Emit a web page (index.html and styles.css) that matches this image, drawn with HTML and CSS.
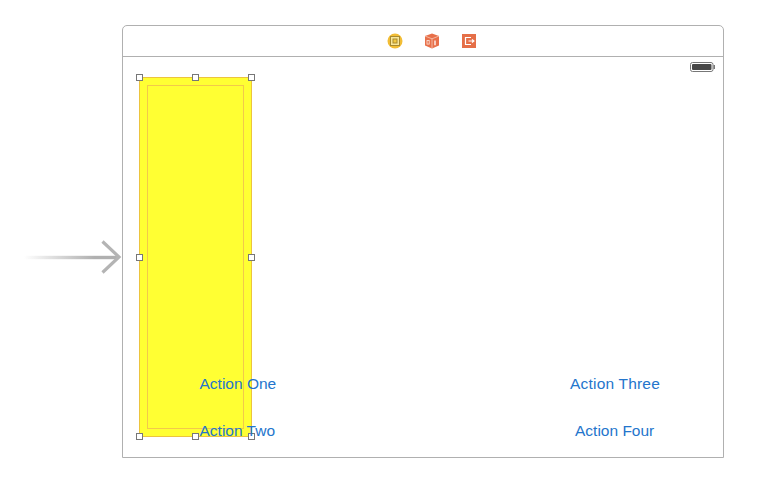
FILE: index.html
```html
<!DOCTYPE html>
<html lang="en">
<head>
<meta charset="utf-8">
<title>Storyboard scene</title>
<link rel="stylesheet" href="styles.css">
</head>
<body>
<div class="canvas">
  <svg class="entry-arrow" width="100" height="40" viewBox="0 0 100 40">
    <defs>
      <linearGradient id="fade" x1="0" x2="1" y1="0" y2="0">
        <stop offset="0" stop-color="#b0b0b0" stop-opacity="0"/>
        <stop offset="0.75" stop-color="#b0b0b0"/>
      </linearGradient>
    </defs>
    <rect x="0" y="16.8" width="94" height="3.4" fill="url(#fade)"/>
    <path d="M78.5 2.5 L95 18 L78.5 33.5" fill="none" stroke="#b4b4b4" stroke-width="3.2"/>
  </svg>
  <section class="scene">
    <header class="dock">
      <svg class="dock-icon" width="16" height="16" viewBox="0 0 16 16">
        <circle cx="8" cy="8" r="7.5" fill="#f2bd35"/>
        <rect x="3.5" y="3.5" width="9" height="9" fill="#f8e69a" stroke="#a88a30"/>
        <rect x="6" y="6" width="4" height="4" fill="#f2c840" stroke="#a88a30"/>
      </svg>
      <svg class="dock-icon" width="16" height="16" viewBox="0 0 16 16">
        <path d="M8 .5 L15 3 V12.5 L8 15.5 L1 12.5 V3 Z" fill="#e8704a"/>
        <path d="M1 3 L8 5.8 L15 3 M8 5.8 V15.5" fill="none" stroke="#f6c9b6" stroke-width="0.8"/>
        <rect x="3" y="7.5" width="2.2" height="3.6" fill="none" stroke="#fbe4da" stroke-width="0.8"/>
        <path d="M11 7.5 V12.2" stroke="#fff" stroke-width="1.3"/>
      </svg>
      <svg class="dock-icon" width="16" height="16" viewBox="0 0 16 16">
        <rect x="1" y="1" width="14" height="14" fill="#e56f48"/>
        <path d="M10 4.5 H4.5 V11.5 H10" fill="none" stroke="#fff" stroke-width="1.2"/>
        <path d="M7.5 8 H12.5 M11 6.3 L13 8 L11 9.7" fill="none" stroke="#fff" stroke-width="1.1"/>
      </svg>
    </header>
    <div class="view">
      <svg class="battery" width="26" height="10" viewBox="0 0 26 10">
        <rect x="0.5" y="0.5" width="22.5" height="9" rx="2" fill="#fff" stroke="#777"/>
        <rect x="2" y="2" width="19.5" height="6" rx="1" fill="#484848"/>
        <rect x="23.5" y="3" width="1.5" height="4" fill="#777"/>
      </svg>
      <div class="selection">
        <div class="selection-inner"></div>
        <span class="handle h-tl"></span>
        <span class="handle h-tc"></span>
        <span class="handle h-tr"></span>
        <span class="handle h-ml"></span>
        <span class="handle h-mr"></span>
        <span class="handle h-bl"></span>
        <span class="handle h-bc"></span>
        <span class="handle h-br"></span>
      </div>
      <span class="action a-one">Action One</span>
      <span class="action a-two">Action Two</span>
      <span class="action a-three">Action Three</span>
      <span class="action a-four">Action Four</span>
    </div>
  </section>
</div>
</body>
</html>
```
FILE: styles.css
```css
html, body {
  margin: 0;
  padding: 0;
  background: #fff;
}

.canvas {
  position: relative;
  width: 765px;
  height: 484px;
  overflow: hidden;
  font-family: "Liberation Sans", Arial, sans-serif;
}

.entry-arrow {
  position: absolute;
  left: 24px;
  top: 239px;
}

.scene {
  position: absolute;
  left: 122px;
  top: 25px;
  width: 602px;
  height: 433px;
  box-sizing: border-box;
  border: 1px solid #b0b0b0;
  border-radius: 5px 5px 0 0;
  display: flex;
  flex-direction: column;
}

.dock {
  flex: 0 0 30px;
  border-bottom: 1px solid #b0b0b0;
  display: flex;
  align-items: center;
  justify-content: center;
  gap: 21px;
  padding-left: 17px;
}

.dock-icon {
  display: block;
}

.view {
  position: relative;
  flex: 1;
}

.battery {
  position: absolute;
  left: 567px;
  top: 5px;
}

.selection {
  position: absolute;
  left: 16px;
  top: 20px;
  width: 113px;
  height: 360px;
  box-sizing: border-box;
  background: #ffff33;
  border: 1px solid #ecc43e;
}

.selection-inner {
  position: absolute;
  left: 7px;
  top: 7px;
  width: 97px;
  height: 344px;
  box-sizing: border-box;
  border: 1px solid #f2c94a;
}

.handle {
  position: absolute;
  width: 7px;
  height: 7px;
  box-sizing: border-box;
  background: #fff;
  border: 1px solid #777;
}

.h-tl { left: -4px; top: -4px; }
.h-tc { left: 52px; top: -4px; }
.h-tr { left: 108px; top: -4px; }
.h-ml { left: -4px; top: 176px; }
.h-mr { left: 108px; top: 176px; }
.h-bl { left: -4px; top: 355px; }
.h-bc { left: 52px; top: 355px; }
.h-br { left: 108px; top: 355px; }

.action {
  position: absolute;
  font-size: 15.5px;
  line-height: 18px;
  color: #2475cc;
  white-space: nowrap;
}

.a-one { left: 76.5px; top: 318px; }
.a-two { left: 76.5px; top: 365px; }
.a-three { left: 447px; top: 318px; letter-spacing: 0.2px; }
.a-four { left: 452px; top: 365px; }
```
